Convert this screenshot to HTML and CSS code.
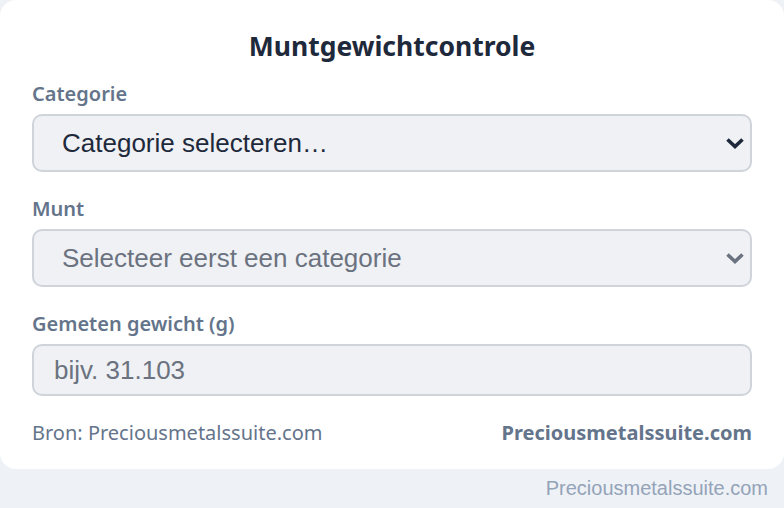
FILE: index.html
```html
<!DOCTYPE html>
<html lang="nl">
<head>
<meta charset="utf-8">
<title>Muntgewichtcontrole</title>
<link rel="stylesheet" href="styles.css">
</head>
<body>
  <main class="card">
    <h1 class="title">Muntgewichtcontrole</h1>

    <div class="field">
      <label class="label" for="category">Categorie</label>
      <div class="select-wrap">
        <select id="category" class="control select">
          <option>Categorie selecteren…</option>
        </select>
        <svg class="chevron" viewBox="0 0 20 12" aria-hidden="true"><path d="M2.5 2.5 L10 9.5 L17.5 2.5" /></svg>
      </div>
    </div>

    <div class="field">
      <label class="label" for="coin">Munt</label>
      <div class="select-wrap is-disabled">
        <select id="coin" class="control select" disabled>
          <option>Selecteer eerst een categorie</option>
        </select>
        <svg class="chevron" viewBox="0 0 20 12" aria-hidden="true"><path d="M2.5 2.5 L10 9.5 L17.5 2.5" /></svg>
      </div>
    </div>

    <div class="field">
      <label class="label" for="weight">Gemeten gewicht (g)</label>
      <input id="weight" class="control input" type="text" placeholder="bijv. 31.103">
    </div>

    <footer class="card-footer">
      <span class="source">Bron: Preciousmetalssuite.com</span>
      <span class="brand">Preciousmetalssuite.com</span>
    </footer>
  </main>
  <div class="credit">Preciousmetalssuite.com</div>
</body>
</html>
```

FILE: styles.css
```css
* { box-sizing: border-box; }

html, body {
  margin: 0;
  padding: 0;
}

body {
  background: #eef1f6;
  font-family: "Noto Sans", "Open Sans", sans-serif;
  width: 784px;
  height: 508px;
  overflow: hidden;
}

.card {
  background: #ffffff;
  border-radius: 16px;
  padding: 28px 32px 0 32px;
  height: 469px;
  display: flex;
  flex-direction: column;
}

.title {
  margin: 0 0 18px;
  text-align: center;
  font-size: 26.5px;
  line-height: 36px;
  font-weight: 700;
  color: #1e293b;
}

.field {
  display: flex;
  flex-direction: column;
  margin-bottom: 25px;
}

.label {
  font-size: 20px;
  line-height: 24px;
  font-weight: 600;
  color: #64748b;
  margin-bottom: 8px;
}

.control {
  width: 100%;
  margin: 0;
  font-family: "Liberation Sans", Arial, sans-serif;
  font-size: 26px;
  background: #eff1f4;
  border: 2px solid #cfd4db;
  border-radius: 10px;
  padding: 0 28px;
  outline: none;
}

.select-wrap {
  position: relative;
}

.select {
  -webkit-appearance: none;
  appearance: none;
  height: 58px;
  color: #1e293b;
}

.select:disabled {
  color: #6b7280;
  opacity: 1;
}

.chevron {
  position: absolute;
  right: 7px;
  top: 50%;
  width: 20px;
  height: 12px;
  transform: translateY(-50%);
  fill: none;
  stroke: #1e293b;
  stroke-width: 3.6;
  stroke-linecap: butt;
  stroke-linejoin: miter;
  pointer-events: none;
}

.is-disabled .chevron {
  stroke: #6b7280;
}

.input {
  height: 52px;
  padding-left: 20px;
  color: #1e293b;
}

.input::placeholder {
  color: #6b7280;
}

.card-footer {
  display: flex;
  justify-content: space-between;
  align-items: center;
  font-size: 20px;
  line-height: 24px;
  color: #64748b;
}

.brand {
  font-weight: 700;
}

.credit {
  text-align: right;
  padding: 7px 16px 0 0;
  font-family: "Liberation Sans", Arial, sans-serif;
  font-size: 20px;
  line-height: 24px;
  color: #94a3b8;
}
```
